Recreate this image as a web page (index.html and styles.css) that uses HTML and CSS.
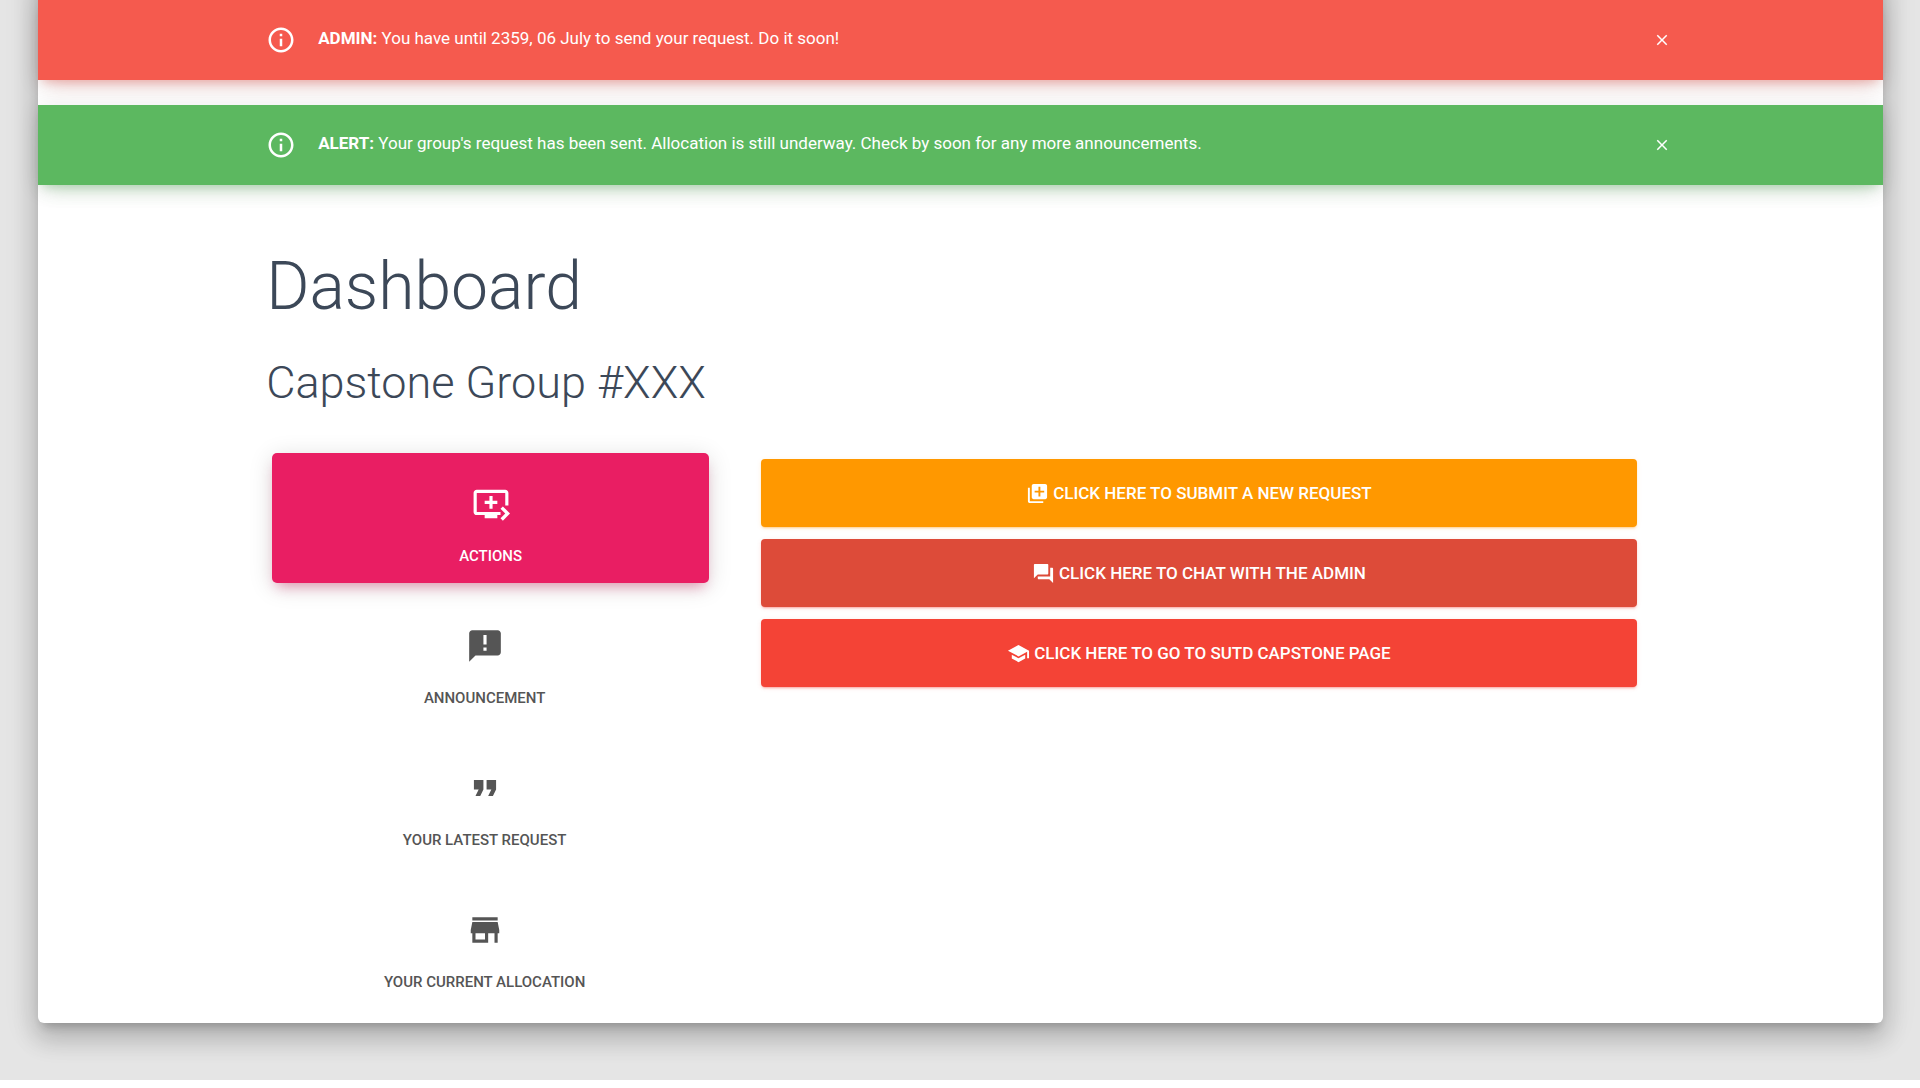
FILE: index.html
```html
<!DOCTYPE html>
<html lang="en">
<head>
<meta charset="utf-8">
<meta name="viewport" content="width=device-width, initial-scale=1">
<title>Dashboard</title>
<link rel="stylesheet" href="styles.css">
</head>
<body>
<div class="page">
  <main class="card">
    <div class="alert alert-danger" role="alert">
      <div class="container alert-body">
        <svg class="alert-icon" viewBox="0 0 24 24" aria-hidden="true"><path d="M11 17h2v-6h-2v6zm1-15C6.480 2 2 6.480 2 12s4.480 10 10 10 10-4.480 10-10S17.520 2 12 2zm0 18c-4.410 0-8-3.590-8-8s3.590-8 8-8 8 3.590 8 8-3.590 8-8 8zM11 9h2V7h-2v2z"/></svg>
        <p class="alert-text"><b>ADMIN:</b> You have until 2359, 06 July to send your request. Do it soon!</p>
        <button class="alert-close" type="button" aria-label="Close"><svg viewBox="0 0 24 24" aria-hidden="true"><path d="M19 6.410L17.590 5 12 10.590 6.410 5 5 6.410 10.590 12 5 17.590 6.410 19 12 13.410 17.590 19 19 17.590 13.410 12z"/></svg></button>
      </div>
    </div>
    <div class="alert alert-success" role="alert">
      <div class="container alert-body">
        <svg class="alert-icon" viewBox="0 0 24 24" aria-hidden="true"><path d="M11 17h2v-6h-2v6zm1-15C6.480 2 2 6.480 2 12s4.480 10 10 10 10-4.480 10-10S17.520 2 12 2zm0 18c-4.410 0-8-3.590-8-8s3.590-8 8-8 8 3.590 8 8-3.590 8-8 8zM11 9h2V7h-2v2z"/></svg>
        <p class="alert-text"><b>ALERT:</b> Your group's request has been sent. Allocation is still underway. Check by soon for any more announcements.</p>
        <button class="alert-close" type="button" aria-label="Close"><svg viewBox="0 0 24 24" aria-hidden="true"><path d="M19 6.410L17.590 5 12 10.590 6.410 5 5 6.410 10.590 12 5 17.590 6.410 19 12 13.410 17.590 19 19 17.590 13.410 12z"/></svg></button>
      </div>
    </div>

    <div class="container content">
      <h1>Dashboard</h1>
      <h2>Capstone Group #XXX</h2>
      <div class="columns">
        <div class="tabs" role="tablist">
          <button class="tab tab-active" type="button" role="tab" aria-selected="true">
            <svg viewBox="0 0 24 24" aria-hidden="true"><path d="M21 3H3c-1.110 0-2 .89-2 2v12c0 1.100.89 2 2 2h5v2h8v-2h2v-2H3V5h18v8h2V5c0-1.110-.9-2-2-2zm-8 7V7h-2v3H8v2h3v3h2v-3h3v-2h-3zm11 8l-4.500 4.500L18 21l3-3-3-3 1.500-1.500L24 18z"/></svg>
            <span>ACTIONS</span>
          </button>
          <button class="tab" type="button" role="tab" aria-selected="false">
            <svg viewBox="0 0 24 24" aria-hidden="true"><path d="M20 2H4c-1.100 0-1.990.9-1.990 2L2 22l4-4h14c1.100 0 2-.9 2-2V4c0-1.100-.9-2-2-2zm-7 9h-2V5h2v6zm0 4h-2v-2h2v2z"/></svg>
            <span>ANNOUNCEMENT</span>
          </button>
          <button class="tab" type="button" role="tab" aria-selected="false">
            <svg viewBox="0 0 24 24" aria-hidden="true"><path d="M6 17h3l2-4V7H5v6h3zm8 0h3l2-4V7h-6v6h3z"/></svg>
            <span>YOUR LATEST REQUEST</span>
          </button>
          <button class="tab" type="button" role="tab" aria-selected="false">
            <svg viewBox="0 0 24 24" aria-hidden="true"><path d="M20 4H4v2h16V4zm1 10v-2l-1-5H4l-1 5v2h1v6h10v-6h4v6h2v-6h1zm-9 4H6v-4h6v4z"/></svg>
            <span>YOUR CURRENT ALLOCATION</span>
          </button>
        </div>
        <div class="actions" role="tabpanel">
          <button class="btn btn-warning" type="button">
            <svg viewBox="0 0 24 24" aria-hidden="true"><path d="M4 6H2v14c0 1.100.9 2 2 2h14v-2H4V6zm16-4H8c-1.100 0-2 .9-2 2v12c0 1.100.9 2 2 2h12c1.100 0 2-.9 2-2V4c0-1.100-.9-2-2-2zm-1 9h-4v4h-2v-4H9V9h4V5h2v4h4v2z"/></svg>
            <span>CLICK HERE TO SUBMIT A NEW REQUEST</span>
          </button>
          <button class="btn btn-chat" type="button">
            <svg viewBox="0 0 24 24" aria-hidden="true"><path d="M21 6h-2v9H6v2c0 .55.45 1 1 1h11l4 4V7c0-.55-.45-1-1-1zm-4 6V3c0-.55-.45-1-1-1H3c-.55 0-1 .45-1 1v14l4-4h10c.55 0 1-.45 1-1z"/></svg>
            <span>CLICK HERE TO CHAT WITH THE ADMIN</span>
          </button>
          <button class="btn btn-danger" type="button">
            <svg viewBox="0 0 24 24" aria-hidden="true"><path d="M5 13.180v4L12 21l7-3.820v-4L12 17l-7-3.820zM12 3L1 9l11 6 9-4.910V17h2V9L12 3z"/></svg>
            <span>CLICK HERE TO GO TO SUTD CAPSTONE PAGE</span>
          </button>
        </div>
      </div>
    </div>
  </main>
</div>
</body>
</html>
```
FILE: styles.css
```css
* {
  box-sizing: border-box;
}

body {
  margin: 0;
  background: #fff;
  color: #3c4858;
  font-family: Roboto, "Liberation Sans", sans-serif;
  font-weight: 300;
}

button {
  border: 0;
  font-family: inherit;
  cursor: pointer;
}

svg {
  display: block;
  flex: none;
  fill: currentColor;
}

.page {
  overflow: hidden;
  padding: 0 37px 57px 38px;
  background: #e5e5e5;
}

/* The raised sheet runs up past the top of the window */
.card {
  margin-top: -40px;
  padding: 40px 0 14px;
  border-radius: 6px;
  background: #fff;
  box-shadow: 0 16px 24px 2px rgba(0, 0, 0, .14),
    0 6px 30px 5px rgba(0, 0, 0, .12),
    0 8px 10px -5px rgba(0, 0, 0, .2);
}

.container {
  width: 77%;
  margin: 0 auto;
  padding-left: 16px;
}

.alert {
  margin-bottom: 25px;
  padding: 20px 0;
  color: #fff;
}

.alert-danger {
  background: #f55a4e;
  box-shadow: 0 12px 20px -10px rgba(244, 67, 54, .28),
    0 4px 20px rgba(0, 0, 0, .12),
    0 7px 8px -5px rgba(244, 67, 54, .2);
}

.alert-success {
  background: #5cb860;
  box-shadow: 0 12px 20px -10px rgba(76, 175, 80, .28),
    0 4px 20px rgba(0, 0, 0, .12),
    0 7px 8px -5px rgba(76, 175, 80, .2);
}

.alert-body {
  display: flex;
  align-items: center;
}

.alert-icon {
  width: 30px;
  height: 30px;
  margin-right: 22px;
}

.alert-text {
  flex: 1;
  margin: 0;
  padding-bottom: 4px;
  font-size: 17px;
  font-weight: 400;
  line-height: 36px;
}

.alert-text b {
  font-weight: 700;
}

.alert-close {
  padding: 0;
  background: none;
  color: #fff;
}

.alert-close svg {
  width: 18px;
  height: 18px;
}

h1,
h2 {
  margin: 0;
  font-weight: 300;
}

h1 {
  padding-top: 39px;
  font-size: 66px;
  line-height: 76px;
}

h2 {
  margin-top: 31px;
  font-size: 45px;
  line-height: 54px;
}

.columns {
  display: grid;
  grid-template-columns: minmax(0, 1fr) minmax(0, 2fr);
  gap: 42px;
  margin-top: 43px;
  padding-right: 34px;
}

.tabs,
.actions {
  display: flex;
  flex-direction: column;
  gap: 12px;
}

.actions {
  padding: 6px 0 0 10px;
}

.tab {
  display: flex;
  flex-direction: column;
  align-items: center;
  gap: 21px;
  margin-right: 6px;
  padding: 32px 15px 15px;
  border-radius: 5px;
  background: none;
  color: #555;
  font-size: 15px;
  font-weight: 500;
  line-height: 24px;
}

.tab svg {
  width: 38px;
  height: 38px;
}

.tab-active {
  margin: 0 0 0 6px;
  background: #e91e63;
  color: #fff;
  box-shadow: 0 4px 25px rgba(0, 0, 0, .14),
    0 8px 12px -5px rgba(233, 30, 99, .4);
}

.btn {
  display: flex;
  align-items: center;
  justify-content: center;
  gap: 4px;
  height: 68px;
  padding: 0 36px;
  border-radius: 4px;
  color: #fff;
  font-size: 17px;
  font-weight: 500;
}

.btn svg {
  width: 23px;
  height: 23px;
}

.btn-warning {
  background: #ff9800;
  box-shadow: 0 2px 2px rgba(255, 152, 0, .14),
    0 3px 1px -2px rgba(255, 152, 0, .2),
    0 1px 5px rgba(255, 152, 0, .12);
}

.btn-chat {
  background: #dd4b39;
}

.btn-danger {
  background: #f44336;
}

.btn-chat,
.btn-danger {
  box-shadow: 0 2px 2px rgba(244, 67, 54, .14),
    0 3px 1px -2px rgba(244, 67, 54, .2),
    0 1px 5px rgba(244, 67, 54, .12);
}
```
